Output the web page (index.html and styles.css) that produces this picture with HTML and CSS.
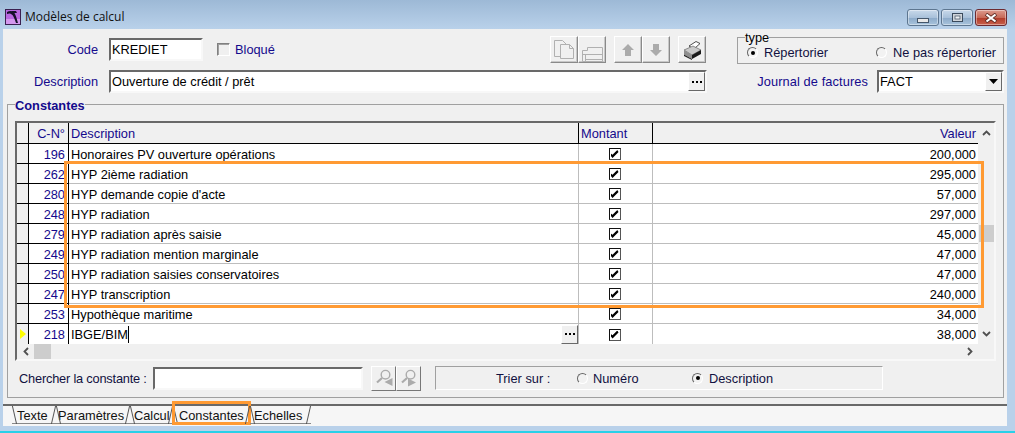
FILE: index.html
```html
<!DOCTYPE html>
<html lang="fr">
<head>
<meta charset="utf-8">
<title>Modèles de calcul</title>
<link rel="stylesheet" href="styles.css">
</head>
<body>
<div class="window">
  <header class="titlebar">
    <svg class="appicon" width="16" height="16" viewBox="0 0 16 16"><rect width="16" height="16" fill="#3a2050"/><rect x="1" y="1" width="14" height="14" fill="#b868e0"/><rect x="1" y="10" width="14" height="5" fill="#d498ee"/><path d="M2 3 C5 1 9 2 10 5 C11.500 8 12 11 13 14 L11 14 C10 11 9 8 7.500 6 C6 4.500 4 4 2 5Z" fill="#15102a"/><path d="M6 2 L11 2 L12 4 L8 4Z" fill="#15102a"/></svg>
    <span class="title">Modèles de calcul</span>
    <div class="winbtns">
      <span class="winbtn minb"><svg width="12" height="5" viewBox="0 0 12 5"><rect x="0.500" y="0.500" width="11" height="4" fill="#e8e8e8" stroke="#44566a"/></svg></span>
      <span class="winbtn"><svg width="11" height="9" viewBox="0 0 11 9"><rect x="0.500" y="0.500" width="10" height="8" fill="#cfd4da" stroke="#3a4a5c"/><rect x="3" y="3" width="5" height="3" fill="#eef1f4" stroke="#3a4a5c" stroke-width=".7"/></svg></span>
      <span class="winbtn close"><svg width="14" height="10" viewBox="0 0 14 10"><path d="M2 1 L12 9 M12 1 L2 9" stroke="#5c2a22" stroke-width="3.600"/><path d="M2.500 1.500 L11.500 8.500 M11.500 1.500 L2.500 8.500" stroke="#fff" stroke-width="2.200"/></svg></span>
    </div>
  </header>
  <main class="client">
    <div class="top">
      <div class="top-left">
        <div class="row row-code">
          <label class="lbl lbl-code">Code</label>
          <span class="input input-code">KREDIET</span>
          <span class="check"></span>
          <label class="lbl">Bloqué</label>
          <div class="tools">
            <span class="tool"><svg width="26" height="25" viewBox="0 0 26 25" fill="#f0f0f0" stroke="#b0b0b0"><path d="M3.500 3.500h8l4 4v12h-12z"/><path d="M9.500 7.500h9l4 4v10h-13z"/><path d="M18.500 7.500v4h4" fill="none"/></svg></span>
            <span class="tool"><svg width="26" height="25" viewBox="0 0 26 25" fill="none" stroke="#b0b0b0"><path d="M3.500 13.500H8.500V10.500H23.500V24.500H3.500Z"/><path d="M3.500 17.500H23.500M6.500 17.500V24.500M6.500 22.500H23.500"/></svg></span>
            <span class="tool gap"><svg width="14" height="14" viewBox="0 0 14 14"><path d="M7 1 L13 7 H10 V13 H4 V7 H1Z" fill="#ababab"/></svg></span>
            <span class="tool"><svg width="14" height="14" viewBox="0 0 14 14"><path d="M7 13 L13 7 H10 V1 H4 V7 H1Z" fill="#ababab"/></svg></span>
            <span class="tool gap"><svg width="22" height="22" viewBox="0 0 22 22"><path d="M8 7 L15 2.500 L19 4.500 L13 10Z" fill="#fff" stroke="#222" stroke-width=".8"/><path d="M3 11 L12 7 L20 11 L11 16Z" fill="#c9c9c9" stroke="#555" stroke-width=".6"/><path d="M3 11 L11 16 L11 20 L3 15.500Z" fill="#8e8e8e"/><path d="M11 16 L20 11 L20 15 L11 20Z" fill="#1a1a1a"/><path d="M3 15.500 L11 20 L11 21 L3 17Z" fill="#222"/></svg></span>
          </div>
        </div>
        <div class="row row-desc">
          <label class="lbl lbl-code">Description</label>
          <span class="input input-desc">Ouverture de crédit / prêt<span class="dots"><svg width="10" height="2" viewBox="0 0 10 2"><path d="M0 0h2v2H0zM4 0h2v2H4zM8 0h2v2H8z"/></svg></span></span>
        </div>
      </div>
      <div class="top-right">
        <fieldset class="typebox">
          <legend>type</legend>
          <span class="radio on"></span><span class="rlabel r1">Répertorier</span>
          <span class="radio"></span><span class="rlabel r2">Ne pas répertorier</span>
        </fieldset>
        <div class="journal">
          <label class="lbl journal-l">Journal de factures</label>
          <span class="input input-journal">FACT<span class="drop"><svg width="9" height="5" viewBox="0 0 9 5"><path d="M0 0H9L4.500 5Z" fill="#000"/></svg></span></span>
        </div>
      </div>
    </div>

    <fieldset class="group">
      <legend>Constantes</legend>
      <div class="gridwrap">
        <div class="gridmain">
          <div class="grid">
            <div class="gr head"><span class="ind"></span><span class="num">C-N°</span><span class="desc">Description</span><span class="mont">Montant</span><span class="val">Valeur</span></div>
            <div class="gr"><span class="ind"></span><span class="num">196</span><span class="desc">Honoraires PV ouverture opérations</span><span class="mont"><i class="cb"></i></span><span class="val">200,000</span></div>
            <div class="gr"><span class="ind"></span><span class="num">262</span><span class="desc">HYP 2ième radiation</span><span class="mont"><i class="cb"></i></span><span class="val">295,000</span></div>
            <div class="gr"><span class="ind"></span><span class="num">280</span><span class="desc">HYP demande copie d'acte</span><span class="mont"><i class="cb"></i></span><span class="val">57,000</span></div>
            <div class="gr"><span class="ind"></span><span class="num">248</span><span class="desc">HYP radiation</span><span class="mont"><i class="cb"></i></span><span class="val">297,000</span></div>
            <div class="gr"><span class="ind"></span><span class="num">279</span><span class="desc">HYP radiation après saisie</span><span class="mont"><i class="cb"></i></span><span class="val">45,000</span></div>
            <div class="gr"><span class="ind"></span><span class="num">249</span><span class="desc">HYP radiation mention marginale</span><span class="mont"><i class="cb"></i></span><span class="val">47,000</span></div>
            <div class="gr"><span class="ind"></span><span class="num">250</span><span class="desc">HYP radiation saisies conservatoires</span><span class="mont"><i class="cb"></i></span><span class="val">47,000</span></div>
            <div class="gr"><span class="ind"></span><span class="num">247</span><span class="desc">HYP transcription</span><span class="mont"><i class="cb"></i></span><span class="val">240,000</span></div>
            <div class="gr"><span class="ind"></span><span class="num">253</span><span class="desc">Hypothèque maritime</span><span class="mont"><i class="cb"></i></span><span class="val">34,000</span></div>
            <div class="gr last"><span class="ind cur"></span><span class="num">218</span><span class="desc edit"><span class="caret">IBGE/BIM</span><span class="dots"><svg width="10" height="2" viewBox="0 0 10 2"><path d="M0 0h2v2H0zM4 0h2v2H4zM8 0h2v2H8z"/></svg></span></span><span class="mont"><i class="cb"></i></span><span class="val">38,000</span></div>
          </div>
          <div class="vscroll">
            <svg width="9" height="6" viewBox="0 0 9 6"><path d="M1 5 L4.500 1.500 L8 5" fill="none" stroke="#505050" stroke-width="1.800"/></svg>
            <span class="thumb"></span>
            <svg width="9" height="6" viewBox="0 0 9 6"><path d="M1 1 L4.500 4.500 L8 1" fill="none" stroke="#505050" stroke-width="1.800"/></svg>
          </div>
        </div>
        <div class="hscroll">
          <svg width="6" height="9" viewBox="0 0 6 9"><path d="M5 1 L1.500 4.500 L5 8" fill="none" stroke="#505050" stroke-width="1.800"/></svg>
          <span class="hthumb"></span>
          <svg class="hright" width="6" height="9" viewBox="0 0 6 9"><path d="M1 1 L4.500 4.500 L1 8" fill="none" stroke="#505050" stroke-width="1.800"/></svg>
        </div>
        <span class="hl hl-rows"></span>
      </div>
      <div class="search">
        <label class="slabel search-l">Chercher la constante :</label>
        <span class="input input-search"></span>
        <span class="sbtn first"><svg width="20" height="20" viewBox="0 0 20 20"><circle cx="11.500" cy="6.700" r="4.300" fill="none" stroke="#ababab" stroke-width="1.400"/><path d="M8 10 L3 14.500" stroke="#ababab" stroke-width="2.200"/><path d="M18.500 10V18L10.500 14Z" fill="#ababab"/></svg></span>
        <span class="sbtn"><svg width="20" height="20" viewBox="0 0 20 20"><circle cx="11.500" cy="6.700" r="4.300" fill="none" stroke="#ababab" stroke-width="1.400"/><path d="M8 10 L3 14.500" stroke="#ababab" stroke-width="2.200"/><path d="M9 10.500V18.500L17 14.500Z" fill="#ababab"/></svg></span>
        <div class="sortbox">
          <span class="slabel sort-l">Trier sur :</span>
          <span class="radio"></span><span class="rlabel sort-n">Numéro</span>
          <span class="radio on"></span><span class="rlabel">Description</span>
        </div>
      </div>
    </fieldset>

    <nav class="tabs">
      <span class="tab t1">Texte</span>
      <span class="tab t2">Paramètres</span>
      <span class="tab t3">Calcul</span>
      <span class="tab t4">Constantes<span class="hl hl-tab"></span></span>
      <span class="tab t5">Echelles</span>
    </nav>
  </main>
  <div class="cyan"></div>
</div>
</body>
</html>
```
FILE: styles.css
```css
* { box-sizing: border-box; }
html, body { margin: 0; padding: 0; }
body { width: 1015px; height: 433px; overflow: hidden; font: 12.800px "Liberation Sans", Arial, sans-serif; color: #000; background: #b9d1ea; }
.window { width: 1015px; height: 433px; display: flex; flex-direction: column; background: linear-gradient(#9db9d6 0, #b9d1ea 29px); }
.titlebar { height: 29px; flex: none; display: flex; align-items: flex-start; padding: 9px 8px 0 5px; }
.appicon { margin: 0 4px 0 0; }
.title { font: 12px/16px "Open Sans", sans-serif; color: #111; }
.winbtns { margin: 0 0 0 auto; display: flex; gap: 2px; }
.winbtn { width: 32px; height: 17px; display: flex; align-items: center; justify-content: center; border: 1px solid #5d7690; border-radius: 3px; background: linear-gradient(#c8d9ea 0, #a9c1da 50%, #8ba9c8 51%, #a8c3dc 100%); box-shadow: inset 0 0 0 1px rgba(255,255,255,.4); }
.minb { width: 32px; padding-top: 5px; }
.winbtn.close { border-color: #6d2a30; background: linear-gradient(#dc9b8e 0, #c86a58 50%, #b03a28 51%, #c8604c 100%); }
.client { flex: none; height: 397px; margin: 0 8px 0 3px; background: #f0f0f0; display: flex; flex-direction: column; }
.top { display: flex; height: 75px; flex: none; }
.top-left { width: 704px; flex: none; }
.row { display: flex; align-items: center; }
.row-code { margin-top: 9px; height: 23px; }
.row-desc { margin-top: 9px; height: 23px; }
.lbl { color: #140a8c; }
.lbl-code { width: 95px; text-align: right; margin-right: 11px; flex: none; }
.journal-l { letter-spacing: .1px; }
.input { display: flex; align-items: center; background: #fff; border: 2px solid; border-color: #696969 #f8f8f8 #f8f8f8 #696969; height: 23px; padding: 0 0 0 1px; color: #000; white-space: nowrap; }
.input-code { width: 94px; }
.input-desc { width: 598px; flex: none; }
.check { width: 13px; height: 13px; margin: 0 5px 0 14px; border: 1px solid; border-color: #808080 #fff #fff #808080; background: #f0f0f0; box-shadow: inset 1px 1px 0 #a0a0a0; }
.dots { margin-left: auto; width: 17px; height: 19px; background: #f0f0f0; border: 1px solid; border-color: #fff #696969 #696969 #fff; display: flex; align-items: center; justify-content: center; flex: none; }
.tools { display: flex; align-items: flex-start; margin: -2px 1px 0 auto; height: 27px; align-self: flex-start; }
.tool { width: 28px; height: 27px; display: flex; align-items: center; justify-content: center; background: #f0f0f0; border: 1px solid; border-color: #fff #8a8a8a #8a8a8a #fff; box-shadow: inset -1px -1px 0 #c8c8c8; }
.tool.gap { margin-left: 8px; }
.top-right { width: 267px; margin-left: auto; margin-right: 3px; flex: none; }
.typebox { margin: 8px 0 0; padding: 4px 0 0 9px; height: 27px; border: 1px solid #a0a0a0; display: flex; align-items: center; position: relative; }
.typebox legend { position: absolute; top: -6px; left: 7px; padding: 0; background: #f0f0f0; line-height: 12px; color: #000; }
.radio { width: 11px; height: 11px; border-radius: 50%; flex: none; background: #f2f2f2; border: 1px solid; border-color: #666 #fff #fff #666; position: relative; display: inline-block; }
.radio.on::after { content: ""; position: absolute; left: 2.500px; top: 2.500px; width: 4px; height: 4px; background: #000; border-radius: 50%; }
.rlabel { margin-left: 6px; color: #111140; }
.r1 { width: 112px; flex: none; }
.journal { display: flex; align-items: center; margin-top: 6px; justify-content: flex-end; }
.input-journal { width: 127px; margin-left: 9px; flex: none; }
.drop { margin-left: auto; width: 17px; height: 19px; background: #f0f0f0; border: 1px solid; border-color: #fff #696969 #696969 #fff; display: flex; align-items: center; justify-content: center; }
.group { flex: none; margin: 0 0 0 4px; padding: 0; width: 997px; height: 294px; border: 1px solid #a0a0a0; position: relative; min-width: 0; }
.group > legend { position: absolute; top: -6px; left: 7px; padding: 0; background: #f0f0f0; font-weight: bold; color: #140a8c; line-height: 13px; }
.gridwrap { margin: 16px 0 0 7px; width: 981px; height: 240px; border: 2px solid; border-color: #696969 #f8f8f8 #f8f8f8 #696969; position: relative; background: #f0f0f0; }
.gridmain { display: flex; height: 221px; }
.grid { width: 961px; flex: none; background: #fff; }
.gr { display: flex; height: 20px; border-bottom: 1px solid #bdbdbd; }
.gr.last { border-bottom: 0; }
.gr.head { height: 21px; background: #f0f0f0; border-bottom: 1px solid #000; }
.gr > span { display: flex; align-items: center; height: 100%; white-space: nowrap; padding-top: 1px; }
.ind { width: 12px; background: #f0f0f0; border-right: 1px solid #000; flex: none; position: relative; box-shadow: 0 1px 0 #000; }
.ind.cur::after { content: ""; position: absolute; left: 3px; top: 5px; border-left: 6px solid #ffff00; border-top: 5px solid transparent; border-bottom: 5px solid transparent; }
.num { width: 40px; flex: none; justify-content: flex-end; padding-right: 3px; color: #140a8c; border-right: 1px solid #000; box-shadow: 0 1px 0 #000; }
.last .ind, .last .num { box-shadow: none; }
.desc { width: 510px; flex: none; padding-left: 2px; border-right: 1px solid #bdbdbd; }
.head .desc { border-right-color: #000; color: #140a8c; }
.mont { width: 74px; flex: none; justify-content: center; padding-right: 2px; border-right: 1px solid #bdbdbd; }
.head .mont { justify-content: flex-start; padding: 1px 0 0 2px; color: #140a8c; border-right-color: #000; }
.val { width: 325px; flex: none; justify-content: flex-end; padding-right: 2px; }
.head .val { color: #140a8c; }
.gr > .edit { padding: 0 0 0 2px; }
.caret { border-right: 1px solid #000; height: 17px; line-height: 17px; }
.cb { width: 12px; height: 12px; border: 1px solid; border-color: #111 #555 #555 #111; background: #fff; position: relative; display: block; }
.cb::after { content: ""; position: absolute; left: 1px; top: 1px; width: 8px; height: 8px; background: #000; clip-path: polygon(0 40%, 25% 60%, 85% 0, 100% 25%, 25% 100%, 0 70%); }
.vscroll { flex: 1; display: flex; flex-direction: column; align-items: center; justify-content: space-between; padding: 7px 0 7px; position: relative; }
.thumb { position: absolute; left: 1px; right: 0; top: 102px; height: 17px; background: #cdcdcd; }
.hscroll { height: 15px; display: flex; align-items: center; padding-left: 6px; }
.hthumb { width: 17px; height: 15px; background: #cdcdcd; margin-left: 5px; }
.hright { margin-left: auto; margin-right: 21px; }
.hl { position: absolute; border: 3px solid #ff9a33; pointer-events: none; }
.hl-rows { left: 47px; top: 38px; width: 920px; height: 147px; }
.search { display: flex; align-items: center; height: 24px; margin: 5px 0 0 11px; }
.slabel { color: #111140; white-space: nowrap; }
.search-l { width: 134px; flex: none; letter-spacing: -.2px; }
.input-search { width: 210px; flex: none; }
.sbtn { width: 25px; height: 25px; display: flex; align-items: center; justify-content: center; background: #f0f0f0; border: 1px solid; border-color: #fff #777 #777 #fff; flex: none; }
.sbtn.first { margin-left: 8px; }
.sortbox { width: 448px; height: 24px; margin-left: 14px; border: 1px solid; border-color: #a0a0a0 #fff #fff #a0a0a0; display: flex; align-items: center; padding-left: 60px; }
.sort-l { width: 81px; flex: none; }
.sort-n { width: 99px; flex: none; margin-left: 5px; }
.tabs { flex: 1; margin-top: 6px; border-top: 2px solid #696969; background: #f6f6f6; display: flex; padding-left: 9px; }
.tab { height: 18px; display: flex; align-items: center; position: relative; color: #111; white-space: nowrap; flex: none; box-shadow: inset 0 -1px 0 #888; }
.tab::before, .tab::after { content: ""; position: absolute; top: 0; width: 1px; height: 18px; background: #555; }
.tab::before { left: 2px; transform: skewX(13deg); }
.tab::after { right: 2px; transform: skewX(-13deg); }
.t1 { width: 44px; padding-left: 5px; }
.t2 { width: 74px; padding-left: 2px; }
.t3 { width: 43px; padding-left: 4px; }
.t4 { width: 77px; padding-left: 6px; }
.t5 { width: 61px; padding-left: 4px; }
.hl-tab { left: -1px; top: -5px; width: 79px; height: 24px; }
.cyan { flex: 1; margin-top: 5px; background: #28d0e8; }
```
